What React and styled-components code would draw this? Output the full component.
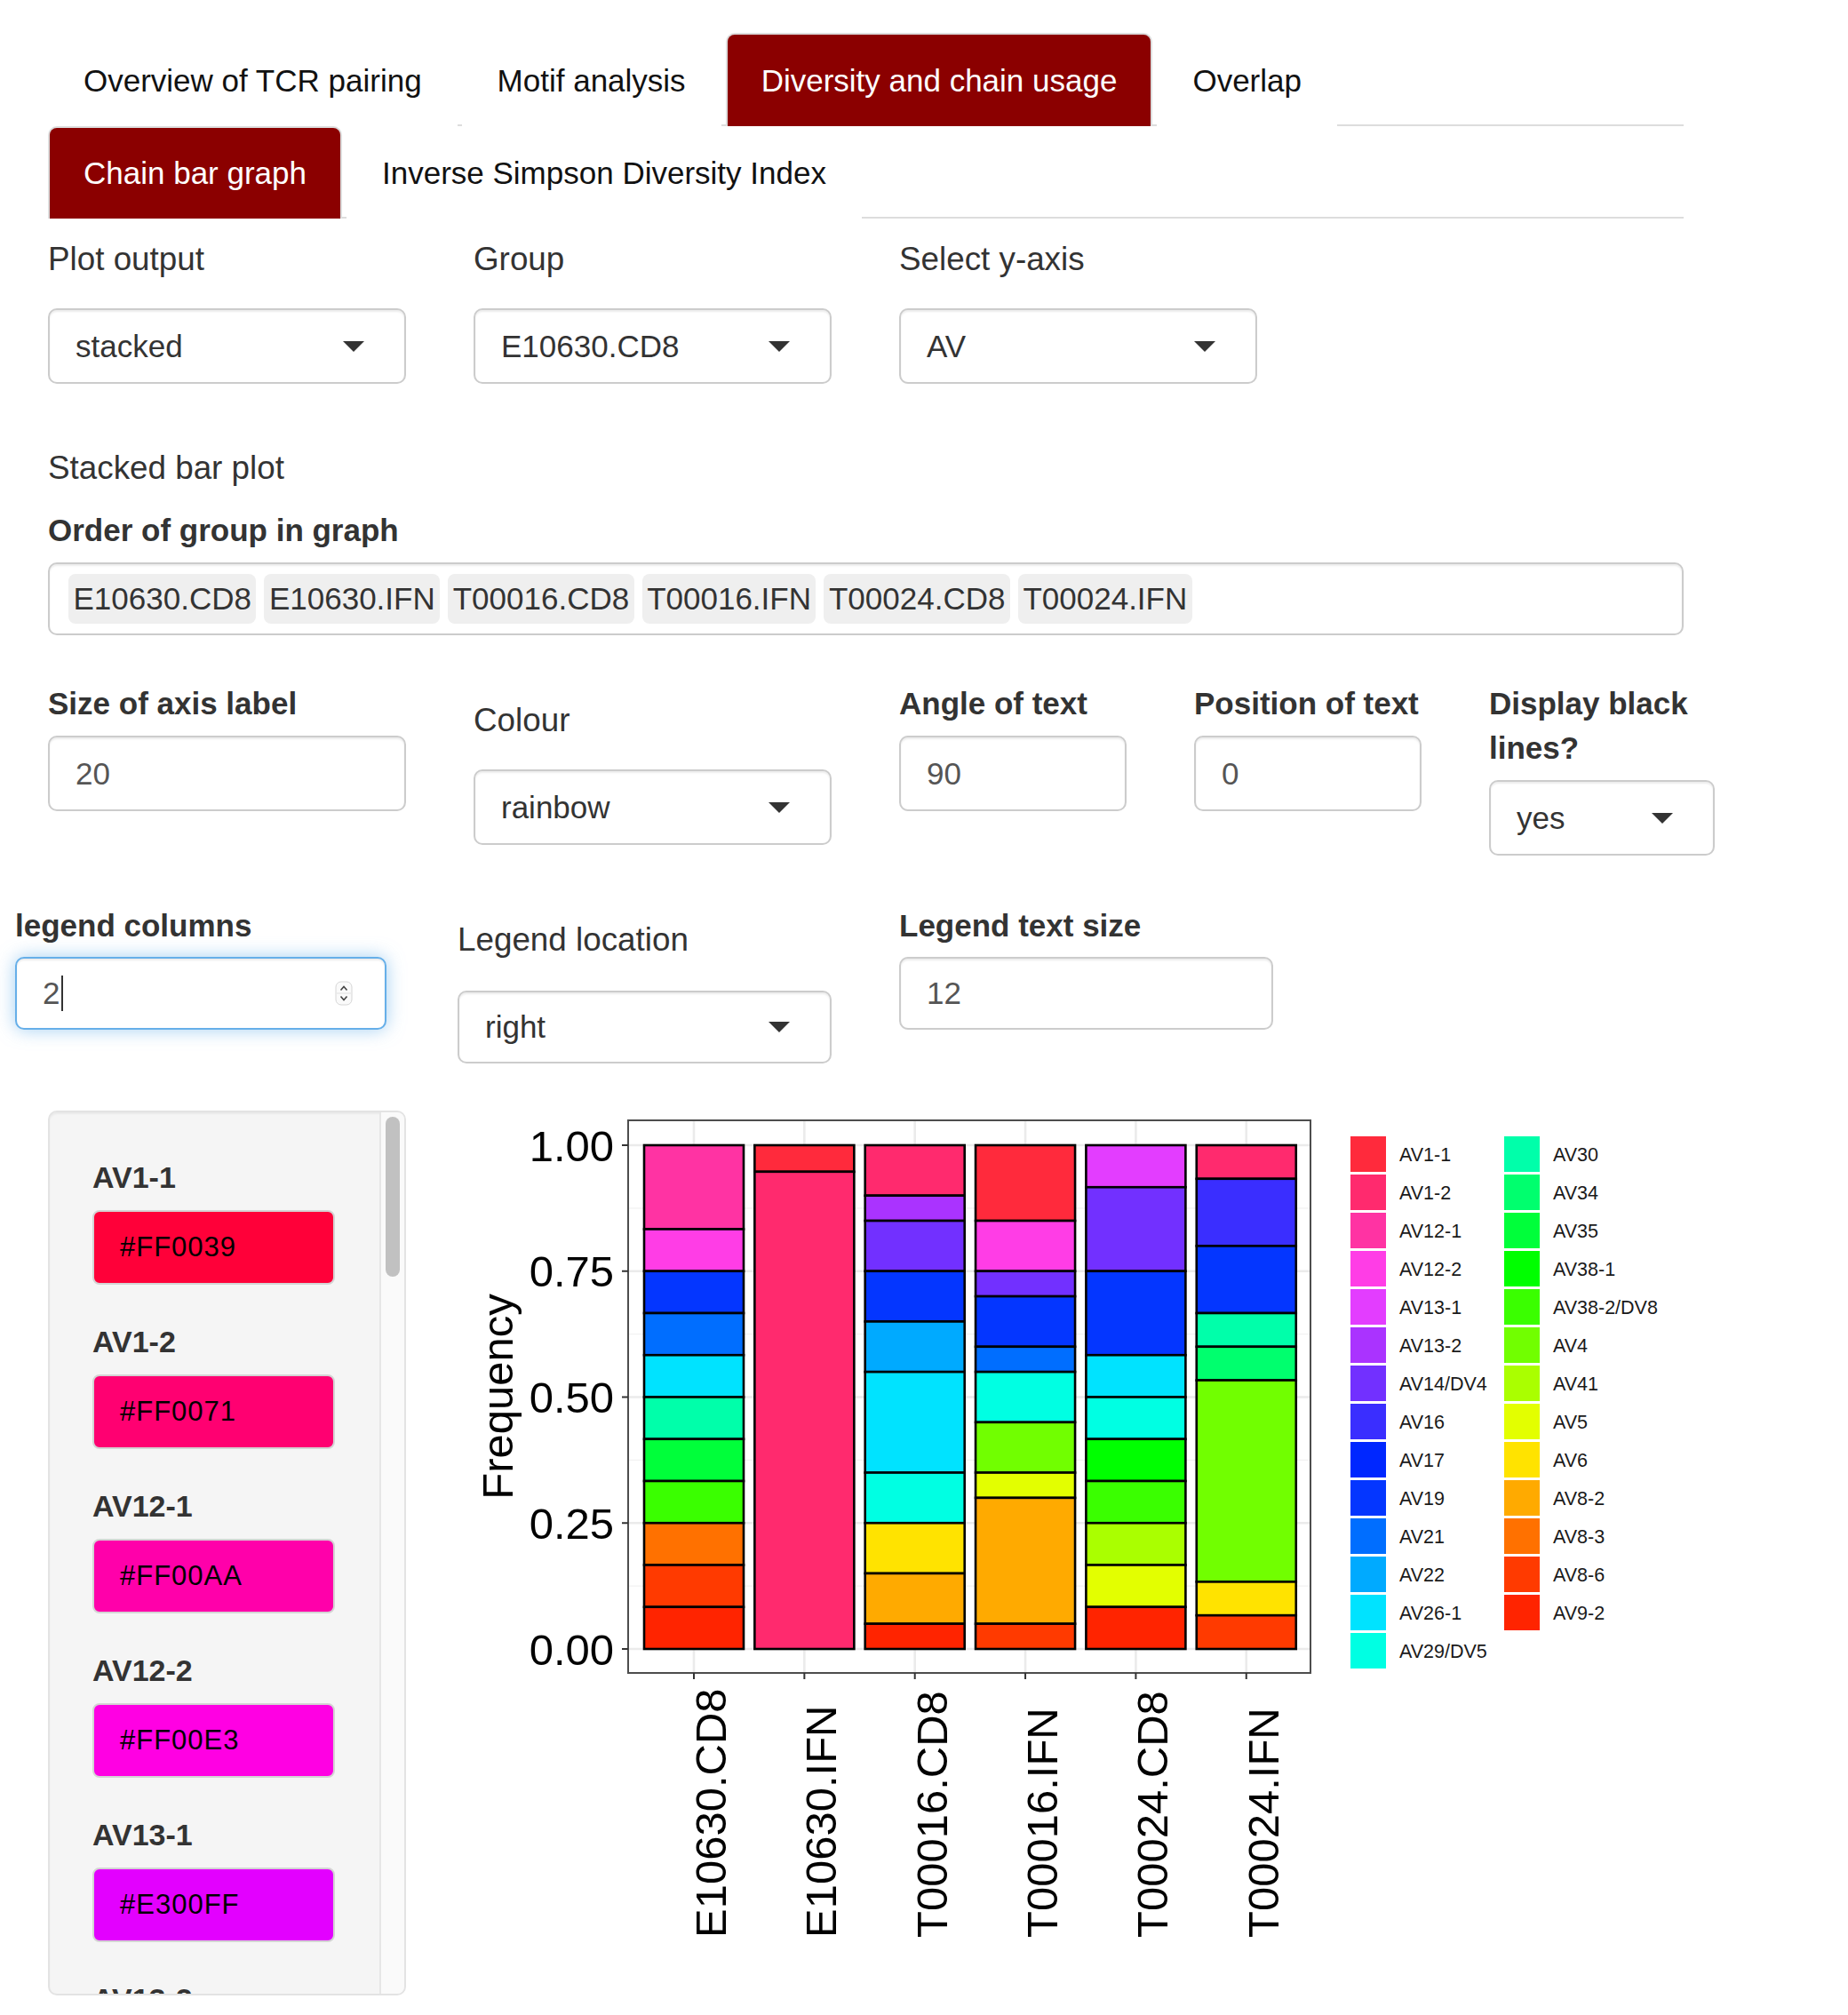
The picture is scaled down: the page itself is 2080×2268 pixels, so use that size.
import React from 'react';
import styled, { createGlobalStyle } from 'styled-components';

const GlobalStyle = createGlobalStyle`
  html, body { margin: 0; padding: 0; background: #fff; }
  body { font-family: "Liberation Sans", Arial, Helvetica, sans-serif; color: #333; }
  * { box-sizing: border-box; }
`;

const geneNames = [
  'AV1-1', 'AV1-2', 'AV12-1', 'AV12-2', 'AV13-1', 'AV13-2', 'AV14/DV4', 'AV16', 'AV17',
  'AV19', 'AV21', 'AV22', 'AV26-1', 'AV29/DV5', 'AV30', 'AV34', 'AV35', 'AV38-1',
  'AV38-2/DV8', 'AV4', 'AV41', 'AV5', 'AV6', 'AV8-2', 'AV8-3', 'AV8-6', 'AV9-2',
];

// hex values shown in the colour pickers
const pickerColours = [
  '#FF0039', '#FF0071', '#FF00AA', '#FF00E3', '#E300FF', '#AA00FF', '#7100FF', '#3900FF', '#0000FF',
  '#0039FF', '#0071FF', '#00AAFF', '#00E3FF', '#00FFE3', '#00FFAA', '#00FF71', '#00FF39', '#00FF00',
  '#39FF00', '#71FF00', '#AAFF00', '#E3FF00', '#FFE300', '#FFAA00', '#FF7100', '#FF3900', '#FF0000',
];

// colours as they come out in the rendered plot
const plotColours = [
  '#FF2A3C', '#FF2A6E', '#FF33A3', '#FF3DE6', '#E33DFF', '#AA33FF', '#7230FF', '#3A2EFF', '#0027FF',
  '#0436FF', '#006EFF', '#00AAFF', '#00E3FF', '#00FFE3', '#00FFAA', '#00FF6E', '#00FF3A', '#00FF00',
  '#3AFF00', '#71FF00', '#AAFF00', '#E3FF00', '#FFE300', '#FFAA00', '#FF7100', '#FF3A00', '#FF2400',
];

const bars = [
  { name: 'E10630.CD8', total: 12, segs: [[2, 2], [3, 1], [9, 1], [10, 1], [12, 1], [14, 1], [16, 1], [18, 1], [24, 1], [25, 1], [26, 1]] },
  { name: 'E10630.IFN', total: 19, segs: [[0, 1], [1, 18]] },
  { name: 'T00016.CD8', total: 20, segs: [[1, 2], [5, 1], [6, 2], [9, 2], [11, 2], [12, 4], [13, 2], [22, 2], [23, 2], [26, 1]] },
  { name: 'T00016.IFN', total: 20, segs: [[0, 3], [3, 2], [6, 1], [9, 2], [10, 1], [13, 2], [19, 2], [21, 1], [23, 5], [25, 1]] },
  { name: 'T00024.CD8', total: 12, segs: [[4, 1], [6, 2], [9, 2], [12, 1], [13, 1], [17, 1], [18, 1], [20, 1], [21, 1], [26, 1]] },
  { name: 'T00024.IFN', total: 15, segs: [[1, 1], [7, 2], [9, 2], [14, 1], [15, 1], [19, 6], [22, 1], [25, 1]] },
];

const groups = bars.map((b) => b.name);

const Page = styled.div`
  width: 2080px;
  padding: 37px 0 0 54px;
`;

const Content = styled.div`
  width: 1841px;
`;

const TabBar = styled.div`
  display: flex;
  gap: 5px;
  border-bottom: 2px solid #ddd;
`;

const Tab = styled.div`
  height: ${(p) => p.$h}px;
  margin-bottom: -2px;
  padding: 0 38px;
  display: flex;
  align-items: center;
  font-size: 35px;
  white-space: nowrap;
  color: ${(p) => (p.$active ? '#fff' : '#111')};
  background: ${(p) => (p.$active ? '#8b0000' : '#fff')};
  border: 2px solid ${(p) => (p.$active ? '#ddd' : 'transparent')};
  border-bottom: 0;
  border-radius: 10px 10px 0 0;
`;

const FieldRow = styled.div`
  display: flex;
  align-items: flex-start;
  gap: 76px;
  margin-top: ${(p) => p.$mt}px;
  margin-left: ${(p) => p.$ml || 0}px;
`;

const Field = styled.div`
  flex: 0 0 ${(p) => p.$w}px;
  width: ${(p) => p.$w}px;
  padding-top: ${(p) => p.$pt || 0}px;
`;

const Label = styled.div`
  font-size: ${(p) => (p.$bold ? 35 : 36.8)}px;
  line-height: 50px;
  font-weight: ${(p) => (p.$bold ? 700 : 400)};
  color: #333;
  white-space: ${(p) => (p.$bold ? 'normal' : 'nowrap')};
  margin-top: ${(p) => p.$mt || 0}px;
  margin-bottom: ${(p) => p.$mb || 0}px;
`;

const Box = styled.div`
  height: ${(p) => p.$h || 85}px;
  display: flex;
  align-items: center;
  padding: 0 ${(p) => p.$pr || 45}px 0 29px;
  font-size: 35px;
  color: ${(p) => (p.$select ? '#333' : '#555')};
  background: #fff;
  border: 2px solid ${(p) => (p.$focus ? '#66afe9' : '#ccc')};
  border-radius: 10px;
  box-shadow: inset 0 2px 2px rgba(0, 0, 0, 0.075)
    ${(p) => (p.$focus ? ', 0 0 20px rgba(102, 175, 233, 0.6)' : '')};
`;

const Value = styled.span`
  flex: 1;
`;

const Caret = styled.span`
  width: 0;
  height: 0;
  border-style: solid;
  border-width: 12px 12px 0 12px;
  border-color: #333 transparent transparent transparent;
`;

const TextCursor = styled.span`
  width: 2px;
  height: 40px;
  margin-left: 2px;
  background: #333;
`;

const Plain = styled.div`
  font-size: 36.8px;
  line-height: 50px;
  color: #333;
  margin-top: ${(p) => p.$mt}px;
`;

const TagBox = styled.div`
  height: 82px;
  display: flex;
  align-items: center;
  gap: 9px;
  padding: 0 21px;
  border: 2px solid #ccc;
  border-radius: 10px;
  box-shadow: inset 0 2px 2px rgba(0, 0, 0, 0.075);
`;

const Tag = styled.span`
  height: 56px;
  display: flex;
  align-items: center;
  padding: 0 5.5px;
  font-size: 35px;
  color: #333;
  background: #efefef;
  border-radius: 8px;
`;

const Bottom = styled.div`
  display: flex;
  align-items: flex-start;
  gap: 63px;
  margin-top: 53px;
`;

const Well = styled.div`
  flex: 0 0 403px;
  width: 403px;
  height: 996px;
  display: flex;
  overflow: hidden;
  background: #f5f5f5;
  border: 2px solid #e3e3e3;
  border-radius: 10px;
  box-shadow: inset 0 2px 2px rgba(0, 0, 0, 0.05);
`;

const WellBody = styled.div`
  flex: 1;
  min-width: 0;
  overflow: hidden;
  padding: 48px 50px 48px 48px;
`;

const ScrollTrack = styled.div`
  flex: 0 0 28px;
  padding: 5px 5px 0 5px;
  background: #fafafa;
  border-left: 2px solid #e6e6e6;
`;

const ScrollThumb = styled.div`
  height: 180px;
  background: #c1c1c1;
  border-radius: 9px;
`;

const SwatchLabel = styled.div`
  font-size: 34px;
  font-weight: 700;
  line-height: 50px;
  color: #333;
  margin-bottom: 12px;
`;

const Swatch = styled.div`
  height: 84px;
  display: flex;
  align-items: center;
  padding-left: 29px;
  margin-bottom: 39px;
  font-size: 31px;
  letter-spacing: 1px;
  color: #000;
  background: ${(p) => p.$c};
  border: 2px solid #d4d4d4;
  border-radius: 8px;
`;

const PlotSvg = styled.svg`
  display: block;
  flex: none;
  font-family: "Liberation Sans", Arial, Helvetica, sans-serif;
`;

const Spinner = () => (
  <svg width="20" height="28" viewBox="0 0 20 28">
    <rect x="1" y="1" width="18" height="26" rx="6" fill="#fafafa" stroke="#d6d6d6" />
    <line x1="2" y1="14" x2="18" y2="14" stroke="#e0e0e0" />
    <path d="M6.5 10.5 L10 6.5 L13.5 10.5" fill="none" stroke="#444" strokeWidth="1.6" />
    <path d="M6.5 17.5 L10 21.5 L13.5 17.5" fill="none" stroke="#444" strokeWidth="1.6" />
  </svg>
);

const Select = ({ value, h }) => (
  <Box $select $h={h}>
    <Value>{value}</Value>
    <Caret />
  </Box>
);

// page -> svg offsets: svg starts at x=520, y=1250
const yOf = (v) => 606 - v * 567;
const xOf = (i) => 261 + i * 124.35;

const Chart = () => {
  const major = [0, 0.25, 0.5, 0.75, 1];
  const minor = [0.125, 0.375, 0.625, 0.875];
  return (
    <PlotSvg width="1440" height="950" viewBox="0 0 1440 950">
      <rect x="187" y="11" width="768" height="622" fill="#fff" />
      {minor.map((v) => (
        <line key={`mi${v}`} x1="187" x2="955" y1={yOf(v)} y2={yOf(v)} stroke="#f2f2f2" strokeWidth="1.3" />
      ))}
      {major.map((v) => (
        <line key={`ma${v}`} x1="187" x2="955" y1={yOf(v)} y2={yOf(v)} stroke="#ebebeb" strokeWidth="2.6" />
      ))}
      {bars.map((b, i) => (
        <line key={`v${b.name}`} x1={xOf(i)} x2={xOf(i)} y1="11" y2="633" stroke="#ebebeb" strokeWidth="2.6" />
      ))}
      {bars.map((b, i) => {
        let cum = 0;
        return (
          <g key={b.name}>
            {b.segs.map(([ci, n]) => {
              const top = yOf(1 - cum / b.total);
              cum += n;
              const h = (n / b.total) * 567;
              return (
                <rect
                  key={`${b.name}${ci}`}
                  x={xOf(i) - 56}
                  y={top}
                  width="112"
                  height={h}
                  fill={plotColours[ci]}
                  stroke="#000"
                  strokeWidth="2.6"
                />
              );
            })}
          </g>
        );
      })}
      <rect x="187" y="11" width="768" height="622" fill="none" stroke="#4d4d4d" strokeWidth="2" />
      {major.map((v) => (
        <g key={`yt${v}`}>
          <line x1="180" x2="187" y1={yOf(v)} y2={yOf(v)} stroke="#333" strokeWidth="2" />
          <text x="171" y={yOf(v) + 17.5} fontSize="49" textAnchor="end" fill="#000">
            {v.toFixed(2)}
          </text>
        </g>
      ))}
      {bars.map((b, i) => (
        <g key={`xt${b.name}`}>
          <line x1={xOf(i)} x2={xOf(i)} y1="633" y2="640" stroke="#333" strokeWidth="2" />
          <text
            transform={`translate(${xOf(i) + 36} 931) rotate(-90)`}
            fontSize="49"
            fill="#000"
          >
            {b.name}
          </text>
        </g>
      ))}
      <text transform="translate(57 322) rotate(-90)" fontSize="49" textAnchor="middle" fill="#000">
        Frequency
      </text>
      {geneNames.map((g, i) => {
        const col = i < 14 ? 0 : 1;
        const row = col ? i - 14 : i;
        const kx = col ? 1173 : 1000;
        const ky = 29 + row * 43;
        return (
          <g key={`lg${g}`}>
            <rect x={kx} y={ky} width="40" height="40" fill={plotColours[i]} />
            <text x={kx + 55} y={ky + 27.5} fontSize="21.5" fill="#1a1a1a">
              {g}
            </text>
          </g>
        );
      })}
    </PlotSvg>
  );
};

export default function App() {
  return (
    <Page>
      <GlobalStyle />
      <Content>
        <TabBar>
          <Tab $h={105}>Overview of TCR pairing</Tab>
          <Tab $h={105}>Motif analysis</Tab>
          <Tab $h={105} $active>Diversity and chain usage</Tab>
          <Tab $h={105}>Overlap</Tab>
        </TabBar>
        <TabBar>
          <Tab $h={104} $active>Chain bar graph</Tab>
          <Tab $h={104}>Inverse Simpson Diversity Index</Tab>
        </TabBar>

        <FieldRow $mt={21}>
          <Field $w={403}>
            <Label $mb={30}>Plot output</Label>
            <Select value="stacked" />
          </Field>
          <Field $w={403}>
            <Label $mb={30}>Group</Label>
            <Select value="E10630.CD8" />
          </Field>
          <Field $w={403}>
            <Label $mb={30}>Select y-axis</Label>
            <Select value="AV" />
          </Field>
        </FieldRow>

        <Plain $mt={70}>Stacked bar plot</Plain>
        <Label $bold $mt={20} $mb={11}>Order of group in graph</Label>
        <TagBox>
          {groups.map((g) => (
            <Tag key={g}>{g}</Tag>
          ))}
        </TagBox>

        <FieldRow $mt={52}>
          <Field $w={403}>
            <Label $bold $mb={11}>Size of axis label</Label>
            <Box>20</Box>
          </Field>
          <Field $w={403} $pt={19}>
            <Label $mb={30}>Colour</Label>
            <Select value="rainbow" />
          </Field>
          <Field $w={256}>
            <Label $bold $mb={11}>Angle of text</Label>
            <Box>90</Box>
          </Field>
          <Field $w={256}>
            <Label $bold $mb={11}>Position of text</Label>
            <Box>0</Box>
          </Field>
          <Field $w={254}>
            <Label $bold $mb={11}>Display black lines?</Label>
            <Select value="yes" />
          </Field>
        </FieldRow>

        <FieldRow $mt={54} $ml={-37}>
          <Field $w={418} style={{ marginRight: 4 }}>
            <Label $bold $mb={10}>legend columns</Label>
            <Box $focus $h={82} $pr={36}>
              <span>2</span>
              <TextCursor />
              <Value />
              <Spinner />
            </Box>
          </Field>
          <Field $w={421} $pt={16}>
            <Label $mb={32}>Legend location</Label>
            <Select value="right" h={82} />
          </Field>
          <Field $w={421}>
            <Label $bold $mb={10}>Legend text size</Label>
            <Box $h={82}>12</Box>
          </Field>
        </FieldRow>

        <Bottom>
          <Well>
            <WellBody>
              {geneNames.map((g, i) => (
                <div key={g}>
                  <SwatchLabel>{g}</SwatchLabel>
                  <Swatch $c={pickerColours[i]}>{pickerColours[i]}</Swatch>
                </div>
              ))}
            </WellBody>
            <ScrollTrack>
              <ScrollThumb />
            </ScrollTrack>
          </Well>
          <Chart />
        </Bottom>
      </Content>
    </Page>
  );
}
